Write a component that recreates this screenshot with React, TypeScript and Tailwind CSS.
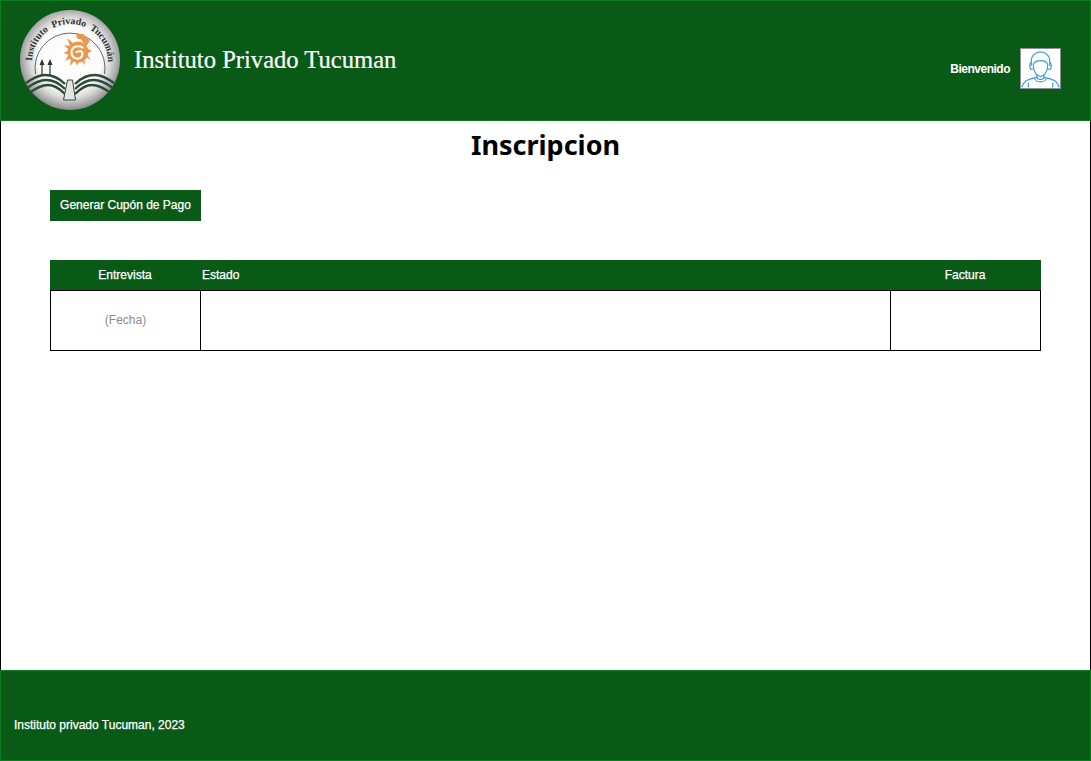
function Logo() {
  return (
    <svg viewBox="0 0 100 100" className="h-[100px] w-[100px] shrink-0">
      <defs>
        <radialGradient id="disc" cx="50%" cy="48%" r="52%">
          <stop offset="0%" stopColor="#ffffff" />
          <stop offset="62%" stopColor="#fbfbfb" />
          <stop offset="78%" stopColor="#d8d8d8" />
          <stop offset="92%" stopColor="#a9a9a9" />
          <stop offset="100%" stopColor="#8a8a8a" />
        </radialGradient>
        <path id="ring" d="M 12 52 A 38 38 0 1 1 88 52" />
      </defs>
      <circle cx="50" cy="50" r="50" fill="url(#disc)" />
      <path d="M 15.5 64 A 35 35 0 1 1 84.5 64" fill="none" stroke="#2a2a2a" strokeWidth="0.7" />
      <text fontFamily="'Liberation Serif', serif" fontSize="9.8" fontWeight="700" fill="#333333" wordSpacing="2.5">
        <textPath href="#ring" startOffset="1">Instituto Privado Tucumán</textPath>
      </text>
      {/* sol */}
      <g fill="#e8994f">
        <circle cx="58" cy="42" r="10.5" />
        <path d="M 44 35 L 51 36 L 49 40 Z" />
        <path d="M 43.5 43 L 49 40 L 49 45 Z" />
        <path d="M 45 51 L 49 44 L 52 48 Z" />
        <path d="M 47 28 L 54 34 L 50 36 Z" />
        <path d="M 50 56 L 51 48 L 55 50 Z" />
        <path d="M 57 55.5 L 55 50 L 60 50 Z" />
        <path d="M 65 55 L 60 49 L 64 47 Z" />
        <path d="M 71 50 L 64 46 L 66 43 Z" />
        <path d="M 72 41 L 66 44 L 66 38 Z" />
        <path d="M 56 23.5 L 63 24 L 70 31 L 66 36 L 61 29.5 L 57 28.5 Z" />
      </g>
      <path d="M 62.5 37.5 C 58 35 51.5 36.5 51.5 42.5 C 51.5 48 57 49.5 60 48 C 63.5 46 63 41.5 60 41 L 56.5 42" fill="none" stroke="#fdf8f0" strokeWidth="2.1" strokeLinecap="round" />
      {/* flechas */}
      <g fill="#24382a">
        <path d="M 21.4 53 H 22.6 V 65 H 21.4 Z" />
        <path d="M 29.4 53 H 30.6 V 65 H 29.4 Z" />
        <path d="M 22 49 L 19.5 55 H 24.5 Z" />
        <path d="M 30 49 L 27.5 55 H 32.5 Z" />
      </g>
      {/* libro */}
      <g fill="none" stroke="#2d4a38" strokeWidth="2.3">
        <path d="M 6 73 C 13 68 18 65 25 65 C 33 65 40 69 45 74" />
        <path d="M 7 78 C 14 73 19 70 26 70 C 34 70 40 74 45 79" />
        <path d="M 9.5 83 C 16 78 21 75 28 75 C 35 75 40 79 45 84" />
        <path d="M 94 73 C 87 68 82 65 75 65 C 67 65 60 69 55 74" />
        <path d="M 93 78 C 86 73 81 70 74 70 C 66 70 60 74 55 79" />
        <path d="M 90.5 83 C 84 78 79 75 72 75 C 65 75 60 79 55 84" />
      </g>
      <path d="M 47.5 70 H 52.5 L 55.5 90 H 43.5 Z" fill="#e4e4e4" stroke="#2d4a38" strokeWidth="1" />
    </svg>
  );
}

function Avatar() {
  return (
    <div className="h-[41px] w-[41px] border border-[#8f8f8f] bg-white">
      <svg viewBox="0 0 40 40" className="h-full w-full" fill="none" stroke="#3a9ae6" strokeWidth="1.2" strokeLinecap="round" strokeLinejoin="round">
        <path d="M 12.5 16 C 13.5 13 16 12 20 12 C 24 12 26.5 13 27.5 16 C 27.5 23 24 28 20 28 C 16 28 12.5 23 12.5 16 Z" />
        <path d="M 10.5 17 V 12.5 C 10.5 6.5 15 3 20 3 C 25 3 29.5 6.5 29.5 12.5 V 17" />
        <path d="M 10.5 14 C 8.5 14.5 8.5 20.5 10.5 21 L 12.5 20.5" />
        <path d="M 29.5 14 C 31.5 14.5 31.5 20.5 29.5 21 L 27.5 20.5" />
        <path d="M 16.5 26.5 V 29 C 16.5 32 23.5 32 23.5 29 V 26.5" />
        <path d="M 16.5 29 C 10 30.5 3 31.5 1 39" />
        <path d="M 23.5 29 C 30 30.5 37 31.5 39 39" />
        <path d="M 14 30 C 15 35 25 35 26 30" />
        <path d="M 7.5 39 V 35 M 32.5 39 V 35" />
      </svg>
    </div>
  );
}

export default function App() {
  return (
    <div className="flex h-[761px] w-[1091px] flex-col border-x border-black bg-white font-['Liberation_Sans',Arial,sans-serif]">
      <header className="-mx-px flex h-[121px] shrink-0 items-center justify-between border border-[#0a7d1e] bg-[#085a16] pb-[1px] pl-[19px] pr-[29px]">
        <div className="flex items-center">
          <Logo />
          <span className="ml-[14px] font-['Liberation_Serif',serif] text-[24.6px] leading-none text-white [-webkit-text-stroke:0.2px_#fff]">Instituto Privado Tucuman</span>
        </div>
        <div className="flex items-center pt-[17px]">
          <span className="mr-[10px] text-xs font-bold tracking-[-0.5px] text-white">Bienvenido</span>
          <Avatar />
        </div>
      </header>

      <main className="flex-1 px-[49px]">
        <h1 className="mt-[7px] text-center font-['Noto_Sans',Tahoma,sans-serif] text-[27px] leading-[34px] font-bold text-black">Inscripcion</h1>
        <button className="mt-[28px] block h-[31px] w-[151px] bg-[#085a16] pb-[2px] text-xs text-white [-webkit-text-stroke:0.25px_#fff]">Generar Cupón de Pago</button>
        <div className="mt-[39px] w-[991px]">
          <div className="flex h-[30px] items-center bg-[#085a16] text-xs text-white [-webkit-text-stroke:0.25px_#fff]">
            <div className="w-[150px] text-center">Entrevista</div>
            <div className="flex-1 pl-[2px]">Estado</div>
            <div className="w-[150px] pr-[2px] text-center">Factura</div>
          </div>
          <div className="flex h-[61px] border border-black">
            <div className="flex w-[150px] items-center justify-center border-r border-black pb-[2px] text-xs text-[#8c8c8c]">(Fecha)</div>
            <div className="flex-1 border-r border-black"></div>
            <div className="w-[149px]"></div>
          </div>
        </div>
      </main>

      <footer className="-mx-px flex h-[91px] shrink-0 items-end border border-[#0a7d1e] bg-[#085a16] pb-[27px] pl-[13px] text-xs text-white [-webkit-text-stroke:0.25px_#fff]">
        Instituto privado Tucuman, 2023
      </footer>
    </div>
  );
}
